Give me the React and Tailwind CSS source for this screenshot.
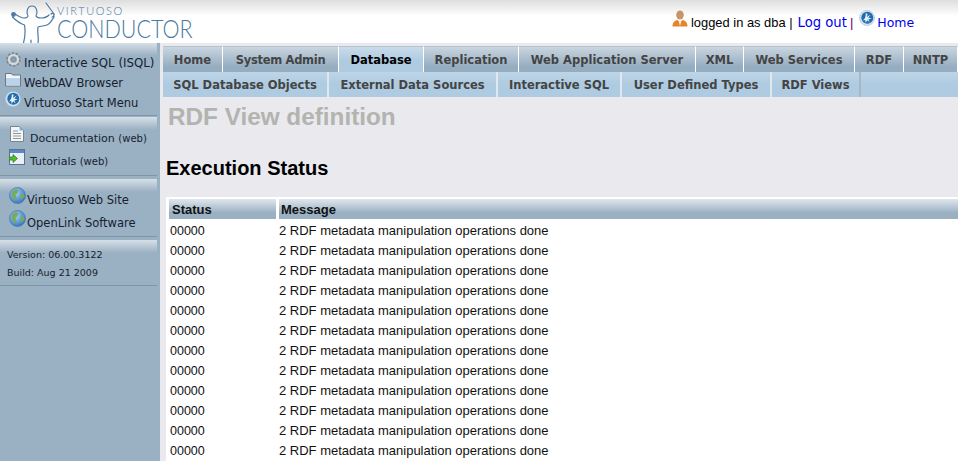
import React from 'react';

const mainTabs = ['Home', 'System Admin', 'Database', 'Replication', 'Web Application Server', 'XML', 'Web Services', 'RDF', 'NNTP'];
const mainWidths = [60, 116, 85, 95, 177, 48, 111, 49, 54];
const subTabs = ['SQL Database Objects', 'External Data Sources', 'Interactive SQL', 'User Defined Types', 'RDF Views'];
const subWidths = [166, 169, 124, 150, 89];
const rows = Array.from({ length: 12 });

const Gear = () => (
  <svg width="17" height="15" viewBox="0 0 17 15" className="shrink-0">
    <circle cx="8.5" cy="7.5" r="6" fill="none" stroke="#7f858b" strokeWidth="2.6" strokeDasharray="2.2 1.5" />
    <circle cx="8.5" cy="7.5" r="4.6" fill="none" stroke="#d9dcde" strokeWidth="2" />
    <circle cx="8.5" cy="7.5" r="2.2" fill="#8fa4b6" stroke="#6f7a84" strokeWidth="0.6" />
  </svg>
);

const Folder = () => (
  <svg width="16" height="15" viewBox="0 0 16 15" className="shrink-0">
    <path d="M0.5 14V1.5h6l1 1.5h8V14z" fill="#eef3f8" stroke="#6b7785" />
    <path d="M1 5.5h14V13.5H1z" fill="#bcd2e8" />
    <path d="M1 5.5h14" stroke="#f6f9fc" />
  </svg>
);

const Swirl = () => (
  <svg width="16" height="16" viewBox="0 0 16 16" className="shrink-0">
    <circle cx="8" cy="8" r="7.6" fill="#d3e2ee" stroke="#a9c4da" strokeWidth="0.6" />
    <circle cx="8.3" cy="7.8" r="6" fill="#1f6cae" />
    <path d="M3.5 10.5C5.5 9.5 7 7 6.8 3.2l1.8.6-.6 3.2 3.6-2.4-2.2 3.2 3.4.4-3.4 1.3 1.4 3-2.6-2.2-1.6 2.8-.4-3z" fill="#e6f0f8" />
  </svg>
);

const Globe = () => (
  <svg width="17" height="17" viewBox="0 0 17 17" className="shrink-0">
    <defs>
      <radialGradient id="sea" cx="0.4" cy="0.35" r="0.7">
        <stop offset="0" stopColor="#a9d2f2" />
        <stop offset="1" stopColor="#2f72bb" />
      </radialGradient>
    </defs>
    <circle cx="8.5" cy="8.5" r="8" fill="url(#sea)" stroke="#4a7fb5" strokeWidth="0.8" />
    <path d="M3 4.5 7 2l2.2 1.5-.8 3-2 1 1.2 4-1.8 2-2.6-4zM11 7.5l3.5-1 1 3-3 3.5z" fill="#78ab58" />
  </svg>
);

const Doc = () => (
  <svg width="14" height="16" viewBox="0 0 14 16" className="shrink-0">
    <path d="M0.5 0.5h9l4 4v11h-13z" fill="#f4f5f6" stroke="#7c848c" />
    <path d="M9.5 0.5l4 4h-4z" fill="#79b4e6" />
    <path d="M3 5h5M3 7.5h8M3 10h8M3 12.5h8" stroke="#8f979e" />
  </svg>
);

const Tutorial = () => (
  <svg width="16" height="16" viewBox="0 0 16 16" className="shrink-0">
    <rect x="0.5" y="0.5" width="15" height="15" fill="#e9f0f7" stroke="#5f7186" />
    <rect x="1" y="1" width="14" height="3" fill="#5a86cc" />
    <path d="M0 8h4V5.5L8.5 9.5 4 13.5V11H0z" fill="#4fc030" stroke="#14610c" strokeWidth="0.6" />
  </svg>
);

const User = () => (
  <svg width="16" height="17" viewBox="0 0 16 17" className="shrink-0">
    <ellipse cx="8" cy="5" rx="3.8" ry="4.6" fill="#c8956b" />
    <path d="M0.5 16.5c0-4 2-5.6 5-6.4L8 12.5l2.5-2.4c3 .8 5 2.4 5 6.4z" fill="#e5842a" />
    <path d="M6.8 12h2.4L8 16z" fill="#f6e3cf" />
  </svg>
);

const Conductor = () => (
  <svg width="48" height="43" viewBox="10 0 48 43" className="shrink-0" fill="none" stroke="#4a79a3" strokeWidth="1.2" strokeLinecap="round" strokeLinejoin="round">
    <path d="M15 14c3 2 6 4 9 4 2 0 4-1 4-2-2-3-1-10 4-10 5 0 6 7 4 10 1 2 3 2 5 2 3 0 6-1 8-3" />
    <path d="M12.5 17c3 3 6 6 12 8 1 6 1 11-1 18" />
    <path d="M54 17c-2 3-4 7-7 8-3 1-6 1-9 2-1 5 1 10 0 16" />
    <path d="M46 3l8 11" />
    <path d="M31 43v-3" />
    <circle cx="13.5" cy="14.5" r="1.8" fill="#4a79a3" />
    <path d="M51 14c1-1 3-1 3 1s-1 2-2 2" />
  </svg>
);

const panelTop = 'bg-gradient-to-b from-[#d6e0e7] to-[#9ab0c3] to-[13px] border-b border-[#7e94a7]';

export default function App() {
  return (
    <div className="w-[958px] h-[461px] overflow-hidden bg-white font-['Liberation_Sans',sans-serif]">
      <header className="h-[43px] flex bg-gradient-to-b from-[#dedede] to-white to-[16px]">
        <div className="w-[672px] flex pl-[10px]">
          <Conductor />
          <div className="mt-[6px] -ml-[1px] flex flex-col text-[#4a79a3] font-['Lato',sans-serif] font-light">
            <span className="text-[11px] tracking-[1.6px] h-[10px] leading-[10px]">VIRTUOSO</span>
            <span className="text-[25px] origin-left scale-x-[0.86] whitespace-nowrap h-[24px] leading-[24px]">CONDUCTOR</span>
          </div>
        </div>
        <div className="flex items-start pt-[10px] text-black">
          <User />
          <span className="ml-[3px] mt-[5px] text-[12.9px] leading-[15px] whitespace-nowrap">logged in as dba |</span>
          <a className="ml-[5px] mt-[5px] text-[#0000ee] font-['DejaVu_Sans',sans-serif] text-[13.2px] leading-[15px]">Log out</a>
          <span className="ml-[3px] mt-[5px] text-[13px] leading-[15px] text-[#660066]">|</span>
          <span className="ml-[6px]"><Swirl /></span>
          <a className="ml-[2px] mt-[5px] text-[#0000ee] font-['DejaVu_Sans',sans-serif] text-[12.5px] leading-[15px]">Home</a>
        </div>
      </header>

      <div className="flex h-[418px]">
        <aside className="w-[160px] shrink-0 bg-[#9ab0c3] font-['DejaVu_Sans',sans-serif] text-[11.5px] leading-[14px] text-[#152230]">
          <div className={`w-[157px] h-[73px] pl-[5px] pt-[9px] ${panelTop}`}>
            <div className="flex items-baseline gap-[2px] h-[20px] text-[11.8px] whitespace-nowrap"><Gear />Interactive SQL (ISQL)</div>
            <div className="flex items-baseline gap-[3px] h-[19px]"><Folder />WebDAV Browser</div>
            <div className="flex items-baseline gap-[3px] h-[16px]"><Swirl />Virtuoso Start Menu</div>
          </div>
          <div className={`w-[157px] mt-[1px] h-[59px] pl-[10px] pt-[9px] text-[11px] ${panelTop}`}>
            <div className="flex items-baseline gap-[6px] h-[23px]"><Doc /><span>Documentation <span className="text-[10px]">(web)</span></span></div>
            <div className="flex items-baseline gap-[5px] h-[16px] -ml-[1px]"><Tutorial /><span>Tutorials <span className="text-[10px]">(web)</span></span></div>
          </div>
          <div className={`w-[157px] mt-[3px] h-[58px] pl-[9px] pt-[8px] ${panelTop}`}>
            <div className="flex items-baseline gap-[1px] h-[23px]"><Globe />Virtuoso Web Site</div>
            <div className="flex items-baseline gap-[1px] h-[17px]"><Globe />OpenLink Software</div>
          </div>
          <div className={`w-[157px] mt-[3px] h-[46px] pl-[7px] pt-[8px] text-[9.5px] flex flex-col gap-[4px] ${panelTop}`}>
            <div>Version: 06.00.3122</div>
            <div>Build: Aug 21 2009</div>
          </div>
        </aside>

        <main className="flex-1 min-w-0 bg-[#e9e9ee] pt-[3px] pl-[3px]">
          <nav className="h-[26px] flex font-['DejaVu_Sans',sans-serif] text-[11.5px] font-bold text-[#444444]">
            {mainTabs.map((t, i) => (
              <div
                key={t}
                style={{ width: mainWidths[i] }}
                className={t === 'Database'
                  ? 'shrink-0 flex items-center justify-center pt-[2px] border-t border-r border-t-[#b6c2cc] border-r-white text-black bg-gradient-to-b from-[#c8dbea] to-[#aecbe1] to-[14px]'
                  : t === 'System Admin'
                    ? 'shrink-0 flex items-center justify-center pt-[2px] tracking-[-0.3px] border-t border-r border-t-[#b6c2cc] border-r-white bg-gradient-to-b from-[#cad5df] to-[#95adc1] to-[20px]'
                    : 'shrink-0 flex items-center justify-center pt-[2px] border-t border-r border-t-[#b6c2cc] border-r-white bg-gradient-to-b from-[#cad5df] to-[#95adc1] to-[20px]'}
              >
                {t}
              </div>
            ))}
          </nav>
          <nav className="h-[25px] flex bg-gradient-to-b from-[#bfd5e7] to-[#aecbe1] to-[12px] font-['DejaVu_Sans',sans-serif] text-[11.5px] font-bold text-[#444444]">
            {subTabs.map((t, i) => (
              <div
                key={t}
                style={{ width: subWidths[i] }}
                className={t === 'RDF Views'
                  ? 'shrink-0 flex items-center justify-center pt-[3px] border-r-2 border-r-[#aab6c1]'
                  : 'shrink-0 flex items-center justify-center pt-[3px] border-r-2 border-r-[#dfe8ef]'}
              >
                {t}
              </div>
            ))}
          </nav>
          <h1 className="mt-[6px] ml-[5px] text-[24.3px] font-bold leading-[28px] text-[#b3b3b0]">RDF View definition</h1>
          <h2 className="mt-[25px] ml-[3px] text-[20px] font-bold leading-[24px] text-black">Execution Status</h2>
          <section className="mt-[17px] ml-[3px] bg-white pl-[3px] pt-[2px] pb-[20px] text-[#111]">
            <div className="flex gap-[3px] h-[20px] mb-[1px] font-bold text-[13px]">
              <div className="w-[107px] pl-[3px] pt-[2px] bg-gradient-to-b from-[#e0e7ed] to-[#9ab0c3] to-[14px] flex items-center">Status</div>
              <div className="flex-1 pl-[2px] pt-[2px] bg-gradient-to-b from-[#e0e7ed] to-[#9ab0c3] to-[14px] flex items-center">Message</div>
            </div>
            {rows.map((_, i) => (
              <div key={i} className="flex gap-[3px] h-[20px] pt-[2px] items-center">
                <div className="w-[107px] pl-[1px] text-[12.5px]">00000</div>
                <div className="flex-1 text-[13px]">2 RDF metadata manipulation operations done</div>
              </div>
            ))}
          </section>
        </main>
      </div>
    </div>
  );
}
